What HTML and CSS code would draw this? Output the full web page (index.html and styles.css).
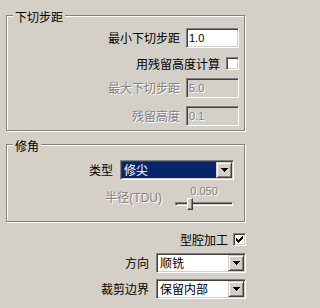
FILE: index.html
```html
<!DOCTYPE html>
<html>
<head>
<meta charset="utf-8">
<link rel="stylesheet" href="styles.css">
</head>
<body>
<div class="panel">
  <div class="group g1">
    <span class="legend">下切步距</span>
    <div class="row r1"><span class="lbl">最小下切步距</span><div class="edit">1.0</div></div>
    <div class="row r2"><span class="lbl">用残留高度计算</span><span class="check"></span></div>
    <div class="row r3"><span class="lbl dis">最大下切步距</span><div class="edit off">5.0</div></div>
    <div class="row r4"><span class="lbl dis">残留高度</span><div class="edit off">0.1</div></div>
  </div>
  <div class="group g2">
    <span class="legend">修角</span>
    <div class="row c1"><span class="lbl">类型</span>
      <div class="combo type sel"><span class="ctext">修尖</span><span class="btn"><svg width="7" height="4" viewBox="0 0 7 4"><path d="M0 0h7v1h-1v1h-1v1h-1v1h-1v-1h-1v-1h-1v-1h-1z" fill="#000"/></svg></span></div>
    </div>
    <div class="row s1"><span class="lbl dis">半径<span class="lat">(TDU)</span></span>
      <div class="slider"><span class="val">0.050</span><div class="track"><span class="thumb"></span></div></div>
    </div>
  </div>
  <div class="bottom">
    <div class="row b1"><span class="lbl">型腔加工</span><span class="check on"><svg width="11" height="11" viewBox="0 0 11 11"><path d="M8 2h1v1h-1z M7 3h2v1h-2z M2 4h1v1h-1z M6 4h3v1h-3z M2 5h2v1h-2z M5 5h3v1h-3z M2 6h5v1h-5z M3 7h3v1h-3z M4 8h1v1h-1z" fill="#000"/></svg></span></div>
    <div class="row b2"><span class="lbl">方向</span>
      <div class="combo wide"><span class="ctext">顺铣</span><span class="btn"><svg width="7" height="4" viewBox="0 0 7 4"><path d="M0 0h7v1h-1v1h-1v1h-1v1h-1v-1h-1v-1h-1v-1h-1z" fill="#000"/></svg></span></div>
    </div>
    <div class="row b3"><span class="lbl">裁剪边界</span>
      <div class="combo wide"><span class="ctext">保留内部</span><span class="btn"><svg width="7" height="4" viewBox="0 0 7 4"><path d="M0 0h7v1h-1v1h-1v1h-1v1h-1v-1h-1v-1h-1v-1h-1z" fill="#000"/></svg></span></div>
    </div>
  </div>
</div>
</body>
</html>
```
FILE: styles.css
```css
html, body {
  margin: 0;
  padding: 0;
}
body {
  background: #d4d0c8;
  width: 255px;
  height: 308px;
  overflow: hidden;
  font-family: "Noto Sans CJK SC", "Noto Sans CJK JP", sans-serif;
  font-size: 12px;
  color: #000;
}
.panel {
  display: flex;
  flex-direction: column;
  padding-top: 15px;
}
.group {
  position: relative;
  margin-left: 6px;
  width: 239px;
  box-sizing: border-box;
  border: 1px solid #808080;
  box-shadow: inset 1px 1px 0 #fff, 1px 1px 0 #fff;
  display: flex;
  flex-direction: column;
  align-items: flex-end;
}
.g1 {
  padding: 12px 5px 4px 0;
}
.g2 {
  margin-top: 13px;
  padding: 15px 0 11px 0;
}
.legend {
  position: absolute;
  left: 6px;
  top: -5px;
  padding: 0 2px;
  background: #d4d0c8;
  line-height: 12px;
  white-space: nowrap;
}
.row {
  display: flex;
  align-items: center;
  gap: 6px;
}
.lbl {
  line-height: 12px;
  white-space: nowrap;
}
.dis {
  color: #808080;
  text-shadow: 1px 1px 0 #fff;
}
.lat {
  font-family: "Liberation Sans", sans-serif;
  font-size: 12px;
}
.r2 { margin-top: 9px; }
.r3 { margin-top: 8px; }
.r4 { margin-top: 8px; }

.edit {
  width: 53px;
  height: 20px;
  box-sizing: border-box;
  border: 1px solid;
  border-color: #808080 #fff #fff #808080;
  box-shadow: inset 1px 1px 0 #404040, inset -1px -1px 0 #d4d0c8;
  background: #fff;
  font-family: "Liberation Sans", sans-serif;
  font-size: 11px;
  line-height: 18px;
  padding-left: 2px;
}
.edit.off {
  background: #d4d0c8;
  color: #808080;
  text-shadow: 1px 1px 0 #fff;
}
.check {
  width: 13px;
  height: 13px;
  box-sizing: border-box;
  border: 1px solid;
  border-color: #808080 #fff #fff #808080;
  box-shadow: inset 1px 1px 0 #404040, inset -1px -1px 0 #d4d0c8;
  background: #fff;
  display: block;
}
.check svg {
  display: block;
}

.c1 {
  margin-right: 10px;
  gap: 7px;
}
.combo {
  display: flex;
  height: 20px;
  box-sizing: border-box;
  border: 1px solid;
  border-color: #808080 #fff #fff #808080;
  box-shadow: inset 1px 1px 0 #404040, inset -1px -1px 0 #d4d0c8;
  padding: 1px;
  background: #fff;
}
.combo.type { width: 114px; }
.combo.wide { width: 90px; }
.ctext {
  flex: 1;
  line-height: 16px;
  padding-left: 2px;
  white-space: nowrap;
}
.sel .ctext {
  background: #0a246a;
  color: #fff;
}
.btn {
  width: 16px;
  height: 16px;
  box-sizing: border-box;
  background: #d4d0c8;
  border: 1px solid;
  border-color: #d4d0c8 #404040 #404040 #d4d0c8;
  box-shadow: inset 1px 1px 0 #fff, inset -1px -1px 0 #808080;
  display: flex;
  align-items: center;
  justify-content: center;
}
.btn svg {
  display: block;
  shape-rendering: crispEdges;
}

.s1 {
  margin-top: 5px;
  margin-right: 11px;
  gap: 13px;
}
.slider {
  width: 58px;
  display: flex;
  flex-direction: column;
  align-items: center;
}
.val {
  font-family: "Liberation Sans", sans-serif;
  font-size: 11px;
  line-height: 13px;
  color: #808080;
  text-shadow: 1px 1px 0 #fff;
}
.track {
  position: relative;
  width: 58px;
  height: 12px;
}
.track::before {
  content: "";
  position: absolute;
  left: 0;
  right: 0;
  top: 4px;
  height: 4px;
  box-sizing: border-box;
  border: 1px solid;
  border-color: #808080 #fff #fff #808080;
  box-shadow: inset 1px 1px 0 #404040;
}
.thumb {
  position: absolute;
  left: 12px;
  top: 0;
  width: 6px;
  height: 12px;
  box-sizing: border-box;
  background: #d4d0c8;
  border: 1px solid;
  border-color: #fff #404040 #404040 #fff;
  box-shadow: inset -1px -1px 0 #808080;
}

.bottom {
  display: flex;
  flex-direction: column;
  align-items: flex-end;
  padding-right: 9px;
  margin-top: 11px;
}
.b1 { gap: 5px; }
.b2 { margin-top: 7px; gap: 7px; }
.b3 { margin-top: 6px; gap: 7px; }
```
